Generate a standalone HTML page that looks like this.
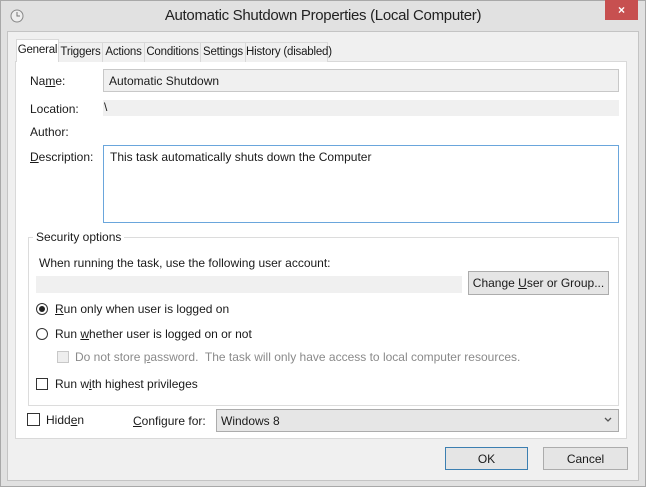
<!DOCTYPE html>
<html><head><style>
*{box-sizing:border-box;margin:0;padding:0}
body{width:646px;height:487px;background:#dedede;font-family:"Liberation Sans",sans-serif;font-size:12px;color:#1a1a1a;position:relative;overflow:hidden}
.a{position:absolute;white-space:nowrap}
.frame{left:0;top:0;width:646px;height:487px;border:1px solid #a8a8a8;background:#e1e1e1}
.body{left:7px;top:31px;width:632px;height:450px;background:#f0f0f0;border:1px solid #c4c4c4}
.tab{top:42px;height:20px;border:1px solid #d9d9d9;border-bottom:none;background:#f0f0f0;padding-top:3px;font-size:11.5px;text-align:center;letter-spacing:-0.2px}
.panel{left:15px;top:61px;width:612px;height:378px;background:#fff;border:1px solid #d9d9d9}
.box{background:#f0f0f0}
.btn{background:#e5e5e5;border:1px solid #acacac;text-align:center;line-height:22px}
.cb{width:12px;height:12px;border:1px solid #333;background:#fff}
.rb{width:12px;height:12px;border:1px solid #333;border-radius:50%;background:#fff}
u{text-decoration:underline}
</style></head><body>
<div class="a frame"></div>
<svg class="a" style="left:10px;top:9px" width="14" height="14"><circle cx="7" cy="7" r="6" fill="#eee" stroke="#888"/><path d="M7 3v4h3" stroke="#777" fill="none"/></svg>
<div class="a" style="left:0;width:646px;top:7px;text-align:center;font-size:15px;color:#222;letter-spacing:-0.3px">Automatic Shutdown Properties (Local Computer)</div>
<div class="a" style="left:605px;top:0;width:33px;height:20px;background:#c75050;color:#fff;text-align:center;font-size:12px;line-height:20px;font-weight:bold">×</div>
<div class="a body"></div>
<div class="a panel"></div>
<div class="a tab" style="left:58px;width:45px">Triggers</div>
<div class="a tab" style="left:102px;width:43px">Actions</div>
<div class="a tab" style="left:144px;width:57px">Conditions</div>
<div class="a tab" style="left:200px;width:46px">Settings</div>
<div class="a tab" style="left:245px;width:83px">History (disabled)</div>
<div class="a tab" style="left:16px;width:43px;top:39px;height:23px;background:#fff;padding-top:4px">General</div>

<div class="a" style="left:30px;top:74px">Na<u>m</u>e:</div>
<div class="a box" style="left:103px;top:69px;width:516px;height:23px;border:1px solid #c8c8c8;padding:4px 5px">Automatic Shutdown</div>
<div class="a" style="left:30px;top:102px">Location:</div>
<div class="a box" style="left:103px;top:100px;width:516px;height:16px;padding:0 1px">\</div>
<div class="a" style="left:30px;top:125px">Author:</div>
<div class="a" style="left:30px;top:150px"><u>D</u>escription:</div>
<div class="a" style="left:103px;top:145px;width:516px;height:78px;border:1px solid #6aa6dc;padding:4px 6px">This task automatically shuts down the Computer</div>

<div class="a" style="left:28px;top:237px;width:591px;height:169px;border:1px solid #dcdcdc"></div>
<div class="a" style="left:33px;top:230px;background:#fff;padding:0 3px">Security options</div>
<div class="a" style="left:39px;top:256px">When running the task, use the following user account:</div>
<div class="a box" style="left:36px;top:276px;width:426px;height:17px"></div>
<div class="a btn" style="left:468px;top:271px;width:141px;height:24px">Change <u>U</u>ser or Group...</div>
<div class="a rb" style="left:36px;top:303px"></div><div class="a" style="left:39px;top:306px;width:6px;height:6px;border-radius:50%;background:#222"></div>
<div class="a" style="left:55px;top:302px"><u>R</u>un only when user is logged on</div>
<div class="a rb" style="left:36px;top:328px"></div>
<div class="a" style="left:55px;top:327px">Run <u>w</u>hether user is logged on or not</div>
<div class="a cb" style="left:57px;top:351px;border-color:#c8c8c8;background:#eee"></div>
<div class="a" style="left:75px;top:350px;color:#8a8a8a">Do not store <u>p</u>assword.&nbsp; The task will only have access to local computer resources.</div>
<div class="a cb" style="left:36px;top:378px"></div>
<div class="a" style="left:55px;top:377px">Run w<u>i</u>th highest privileges</div>

<div class="a cb" style="left:27px;top:413px;width:13px;height:13px"></div>
<div class="a" style="left:46px;top:413px">Hidd<u>e</u>n</div>
<div class="a" style="left:133px;top:414px"><u>C</u>onfigure for:</div>
<div class="a" style="left:216px;top:409px;width:403px;height:23px;background:#e6e6e6;border:1px solid #acacac;padding:4px 4px">Windows 8</div>
<svg class="a" style="left:604px;top:417px" width="8" height="6"><path d="M1 1l3 3 3-3" stroke="#555" fill="none" stroke-width="1.3"/></svg>

<div class="a btn" style="left:445px;top:447px;width:83px;height:23px;border-color:#3c7fb1">OK</div>
<div class="a btn" style="left:543px;top:447px;width:85px;height:23px">Cancel</div>
</body></html>
